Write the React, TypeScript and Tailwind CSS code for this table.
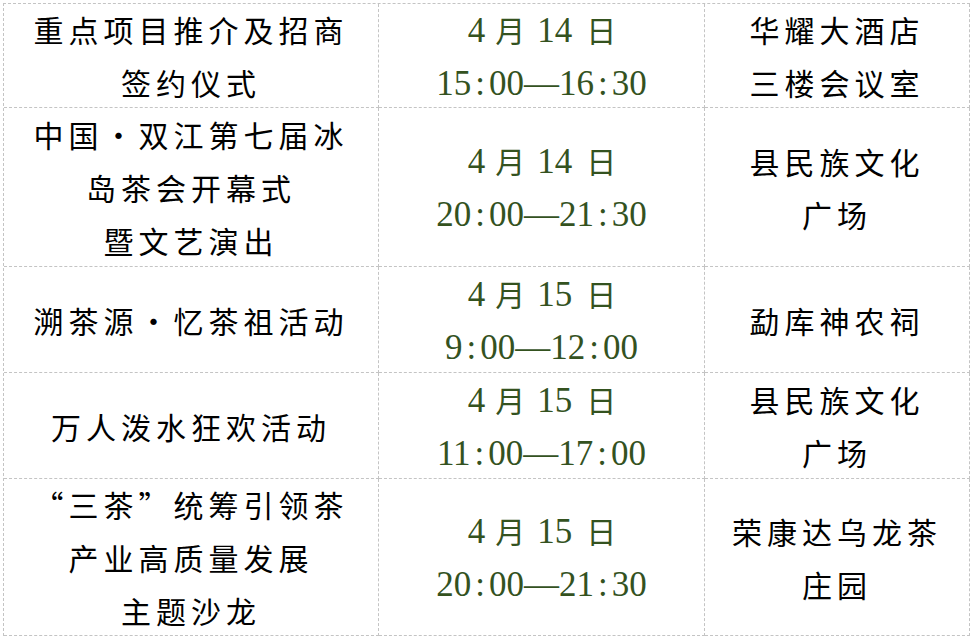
const rows = [
  {
    title: ["重点项目推介及招商", "签约仪式"],
    day: "14",
    time: ["15", "00", "16", "30"],
    place: ["华耀大酒店", "三楼会议室"],
    h: "h-[104px]",
  },
  {
    title: ["中国・双江第七届冰", "岛茶会开幕式", "暨文艺演出"],
    day: "14",
    time: ["20", "00", "21", "30"],
    place: ["县民族文化", "广场"],
    h: "h-[159px]",
  },
  {
    title: ["溯茶源・忆茶祖活动"],
    day: "15",
    time: ["9", "00", "12", "00"],
    place: ["勐库神农祠"],
    h: "h-[106px]",
  },
  {
    title: ["万人泼水狂欢活动"],
    day: "15",
    time: ["11", "00", "17", "00"],
    place: ["县民族文化", "广场"],
    h: "h-[106px]",
  },
  {
    title: ["“三茶”统筹引领茶", "产业高质量发展", "主题沙龙"],
    day: "15",
    time: ["20", "00", "21", "30"],
    place: ["荣康达乌龙茶", "庄园"],
    h: "h-[157px]",
  },
]

const cjk = "font-['Noto_Sans_CJK_SC',sans-serif]"
const cell = "flex flex-col items-center justify-center border-r border-b border-dashed border-[#c4c4c4] pt-[1px] text-center"

function Lines({ lines }: { lines: string[] }) {
  return (
    <>
      {lines.map((l) => (
        <div key={l} className={`${cjk} text-[30px] leading-[53px] tracking-[5px] text-black`}>
          {l}
        </div>
      ))}
    </>
  )
}

function Colon() {
  return <span className="mx-[4px]">:</span>
}

export default function App() {
  return (
    <div className="min-h-screen bg-white pl-[3px] pt-[3px]">
      <div className="grid w-max grid-cols-[375px_326px_265px] border-l border-t border-dashed border-[#c4c4c4]">
        {rows.map((r, i) => (
          <div key={i} className="contents">
            <div className={`${cell} ${r.h}`}>
              <Lines lines={r.title} />
            </div>
            <div className={`${cell} ${r.h} font-['Liberation_Serif','Noto_Sans_CJK_SC',serif] text-[35px] leading-[53px] text-[#34521f]`}>
              <div className="whitespace-nowrap pl-[1px]">
                4
                <span className={`${cjk} ml-[10px] mr-[12px] text-[30px]`}>月</span>
                {r.day}
                <span className={`${cjk} ml-[14px] text-[30px]`}>日</span>
              </div>
              <div className="whitespace-nowrap">
                {r.time[0]}
                <Colon />
                {r.time[1]}—{r.time[2]}
                <Colon />
                {r.time[3]}
              </div>
            </div>
            <div className={`${cell} ${r.h}`}>
              <Lines lines={r.place} />
            </div>
          </div>
        ))}
      </div>
    </div>
  )
}
